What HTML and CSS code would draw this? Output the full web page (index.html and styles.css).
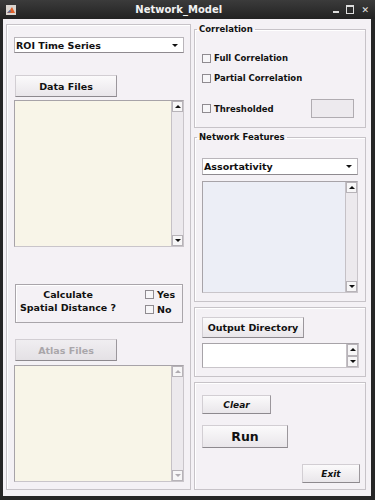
FILE: index.html
```html
<!DOCTYPE html>
<html lang="en">
<head>
    <meta charset="UTF-8">
    <meta name="viewport" content="width=device-width, initial-scale=1.0">
    <title>Network_Model</title>
    <link rel="stylesheet" href="styles.css">
</head>
<body>

    <div class="window">
        <!-- Title bar -->
        <div class="titlebar">
            <svg class="app-icon" width="10" height="10" viewBox="0 0 10 10">
                <rect x="0" y="0" width="10" height="10" fill="#d9d4cf"/>
                <path d="M1 8 L4 5 L6 2 L8 6 L9 8 Z" fill="#e0602a"/>
                <path d="M1 8 L4 5 L5 7 Z" fill="#3a6fb0"/>
            </svg>
            <div class="title">Network_Model</div>
            <div class="controls">
                <span class="ctl-min"></span>
                <span class="ctl-max"></span>
                <span class="ctl-close">&#x2715;</span>
            </div>
        </div>

        <div class="client">
            <!-- Left panel -->
            <div class="panel left-panel">
                <div class="popup popup-roi">
                    <span>ROI Time Series</span>
                    <span class="caret"></span>
                </div>

                <button class="btn btn-data">Data Files</button>

                <div class="listbox list-data">
                    <div class="list-body"></div>
                    <div class="scrollbar">
                        <span class="sb-btn"><span class="arrow-up"></span></span>
                        <span class="sb-track"></span>
                        <span class="sb-btn"><span class="arrow-down"></span></span>
                    </div>
                </div>

                <div class="spatial">
                    <div class="spatial-label">Calculate<br>Spatial Distance ?</div>
                    <div class="spatial-opts">
                        <label class="check"><span class="box"></span>Yes</label>
                        <label class="check"><span class="box"></span>No</label>
                    </div>
                </div>

                <button class="btn btn-atlas" disabled>Atlas Files</button>

                <div class="listbox list-atlas">
                    <div class="list-body"></div>
                    <div class="scrollbar off">
                        <span class="sb-btn"><span class="arrow-up"></span></span>
                        <span class="sb-track"></span>
                        <span class="sb-btn"><span class="arrow-down"></span></span>
                    </div>
                </div>
            </div>

            <!-- Right column -->
            <div class="right-col">
                <fieldset class="group group-corr">
                    <legend>Correlation</legend>
                    <label class="check row-full"><span class="box"></span>Full Correlation</label>
                    <label class="check row-partial"><span class="box"></span>Partial Correlation</label>
                    <div class="row-thresh">
                        <label class="check"><span class="box"></span>Thresholded</label>
                        <div class="thresh-input"></div>
                    </div>
                </fieldset>

                <fieldset class="group group-net">
                    <legend>Network Features</legend>
                    <div class="popup popup-net">
                        <span>Assortativity</span>
                        <span class="caret"></span>
                    </div>
                    <div class="listbox list-net">
                        <div class="list-body"></div>
                        <div class="scrollbar">
                            <span class="sb-btn"><span class="arrow-up"></span></span>
                            <span class="sb-track"></span>
                            <span class="sb-btn"><span class="arrow-down"></span></span>
                        </div>
                    </div>
                </fieldset>

                <div class="panel panel-output">
                    <button class="btn btn-output">Output Directory</button>
                    <div class="listbox edit-output">
                        <div class="list-body"></div>
                        <div class="scrollbar">
                            <span class="sb-btn"><span class="arrow-up"></span></span>
                            <span class="sb-btn"><span class="arrow-down"></span></span>
                        </div>
                    </div>
                </div>

                <div class="panel panel-actions">
                    <button class="btn btn-clear">Clear</button>
                    <button class="btn btn-run">Run</button>
                    <div class="exit-row">
                        <button class="btn btn-exit">Exit</button>
                    </div>
                </div>
            </div>
        </div>
    </div>

</body>
</html>
```

FILE: styles.css
```css
body {
    margin: 0;
    padding: 0;
    background: #1e1e1e;
    font-family: "DejaVu Sans", Arial, sans-serif;
    color: #111;
}
.window {
    width: 375px;
    height: 500px;
    background: #262626;
    display: flex;
    flex-direction: column;
}

/* Title bar */
.titlebar {
    height: 19px;
    display: flex;
    align-items: center;
    background: linear-gradient(#3b3b3b, #222);
    color: #f2f2f2;
}
.app-icon {
    margin-left: 6px;
}
.title {
    flex: 1;
    text-align: center;
    font-weight: bold;
    font-size: 10px;
    margin-left: 8px;
}
.controls {
    display: flex;
    align-items: center;
    gap: 7px;
    margin-right: 6px;
    color: #e6e6e6;
}
.ctl-min {
    width: 6px;
    height: 2px;
    background: #ddd;
    margin-top: 5px;
}
.ctl-max {
    width: 6px;
    height: 6px;
    border: 1px solid #ddd;
    border-top-width: 2px;
}
.ctl-close {
    font-size: 9px;
    font-weight: bold;
}

/* Client area */
.client {
    flex: 1;
    margin: 0 4px 4px 3px;
    background: #f4f1f5;
    display: flex;
    gap: 3px;
    padding: 5px 0 6px 3px;
    overflow: hidden;
}
.panel {
    border: 1px solid #c7c3c8;
    box-shadow: inset 1px 1px 0 #fff;
    box-sizing: border-box;
}
.left-panel {
    width: 185px;
    display: flex;
    flex-direction: column;
    padding: 12px 0 0 7px;
}
.left-panel > * {
    flex-shrink: 0;
}

/* Popup menus */
.popup {
    height: 16px;
    box-sizing: border-box;
    background: #fff;
    border: 1px solid #b9b5ba;
    border-bottom-color: #8e8a8f;
    display: flex;
    align-items: center;
    justify-content: space-between;
    padding: 0 5px 0 1px;
    font-weight: bold;
    font-size: 9.5px;
}
.popup-roi {
    width: 170px;
}
.caret {
    width: 0;
    height: 0;
    border-left: 3px solid transparent;
    border-right: 3px solid transparent;
    border-top: 3px solid #111;
}

/* Buttons */
.btn {
    font-family: "DejaVu Sans", Arial, sans-serif;
    font-weight: bold;
    font-size: 9.5px;
    color: #111;
    background: linear-gradient(#fbfafb, #e9e6ea);
    border: 1px solid #d2ced3;
    border-right-color: #9b979c;
    border-bottom-color: #8d898e;
    padding: 0;
    height: 22px;
}
.btn-data {
    width: 102px;
    margin: 22px 0 0 1px;
}
.btn-atlas {
    width: 102px;
    margin: 16px 0 0 1px;
    color: #a9a6aa;
    background: linear-gradient(#f0eef1, #e4e1e5);
}

/* List boxes */
.listbox {
    display: flex;
    box-sizing: border-box;
    border: 1px solid #a7a3a8;
    border-right-color: #c9c5ca;
    border-bottom-color: #c9c5ca;
}
.list-body {
    flex: 1;
}
.scrollbar {
    width: 11px;
    display: flex;
    flex-direction: column;
    background: #ece9ed;
    border-left: 1px solid #c5c1c6;
}
.sb-btn {
    height: 11px;
    box-sizing: border-box;
    border: 1px solid #b7b3b8;
    background: #f7f6f7;
    display: flex;
    align-items: center;
    justify-content: center;
}
.sb-track {
    flex: 1;
}
.arrow-up, .arrow-down {
    width: 0;
    height: 0;
    border-left: 3px solid transparent;
    border-right: 3px solid transparent;
}
.arrow-up {
    border-bottom: 3px solid #111;
}
.arrow-down {
    border-top: 3px solid #111;
}
.scrollbar.off .arrow-up {
    border-bottom-color: #b0acb1;
}
.scrollbar.off .arrow-down {
    border-top-color: #b0acb1;
}
.list-data {
    width: 170px;
    height: 147px;
    margin-top: 3px;
}
.list-data .list-body, .list-atlas .list-body {
    background: #f8f5e8;
}
.list-atlas {
    width: 170px;
    height: 117px;
    margin-top: 4px;
}

/* Spatial distance box */
.spatial {
    width: 168px;
    height: 39px;
    margin: 37px 0 0 1px;
    box-sizing: border-box;
    border: 1px solid #a9a5aa;
    box-shadow: inset 1px 1px 0 #fff;
    display: flex;
    align-items: flex-start;
    padding-top: 3px;
    font-weight: bold;
    font-size: 9.5px;
}
.spatial-label {
    width: 104px;
    text-align: center;
    line-height: 13px;
}
.spatial-opts {
    display: flex;
    flex-direction: column;
    gap: 4px;
    margin: 1px 0 0 25px;
}

/* Checkboxes */
.check {
    display: flex;
    align-items: center;
    font-weight: bold;
    font-size: 8.5px;
}
.spatial .check {
    font-size: 9.5px;
}
.box {
    width: 7px;
    height: 7px;
    border: 1px solid #8f8b90;
    background: #f7f6f8;
    margin-right: 3px;
}

/* Right column */
.right-col {
    width: 172px;
    display: flex;
    flex-direction: column;
}
.right-col > * {
    flex-shrink: 0;
}
.group {
    margin: 0;
    border: 1px solid #c7c3c8;
    box-shadow: inset 1px 1px 0 #fff;
    box-sizing: border-box;
}
.group legend {
    font-weight: bold;
    font-size: 8.5px;
    padding: 0 2px;
    margin-left: -5px;
}
.group-corr {
    height: 104px;
    padding: 0 7px;
}
.row-full {
    margin-top: 19px;
}
.row-partial {
    margin-top: 10px;
}
.row-thresh {
    margin-top: 16px;
    display: flex;
    align-items: center;
    justify-content: space-between;
    padding-right: 4px;
}
.thresh-input {
    width: 43px;
    height: 19px;
    box-sizing: border-box;
    background: #edeaee;
    border: 1px solid #b0acb1;
}
.group-net {
    height: 170px;
    margin-top: 4px;
    padding: 0 7px;
}
.popup-net {
    margin-top: 16px;
    height: 17px;
}
.list-net {
    height: 112px;
    margin-top: 6px;
}
.list-net .list-body {
    background: #eceef6;
}

.panel-output {
    height: 70px;
    margin-top: 5px;
    padding: 8px 0 0 7px;
}
.btn-output {
    width: 102px;
    height: 21px;
}
.edit-output {
    width: 157px;
    height: 25px;
    margin-top: 5px;
}
.edit-output .list-body {
    background: #fff;
}
.edit-output .sb-btn {
    height: 12px;
}

.panel-actions {
    height: 108px;
    margin-top: 5px;
    padding: 12px 0 0 7px;
    display: flex;
    flex-direction: column;
    align-items: flex-start;
}
.btn-clear {
    width: 69px;
    height: 19px;
    font-style: italic;
    font-size: 9px;
}
.btn-run {
    width: 86px;
    height: 23px;
    margin-top: 11px;
    font-size: 12.5px;
}
.exit-row {
    align-self: stretch;
    display: flex;
    justify-content: flex-end;
    padding-right: 5px;
    margin-top: 16px;
}
.btn-exit {
    width: 58px;
    height: 19px;
    font-style: italic;
    font-size: 9px;
}
```
